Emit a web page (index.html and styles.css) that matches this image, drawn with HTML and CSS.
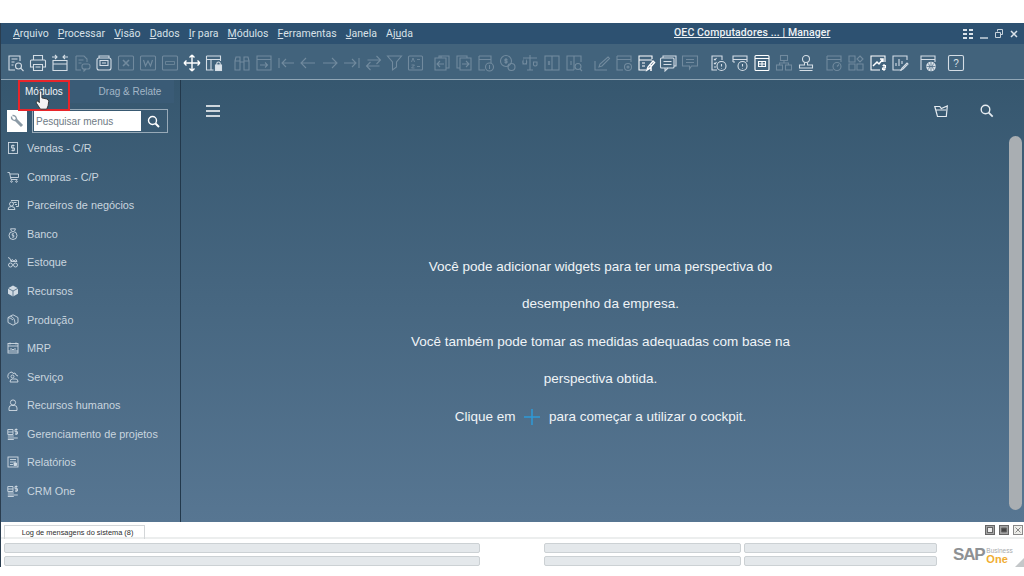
FILE: index.html
```html
<!DOCTYPE html>
<html lang="pt-BR">
<head>
<meta charset="utf-8">
<title>SAP Business One</title>
<link rel="stylesheet" href="styles.css">
</head>
<body>
<div class="app">
  <header class="menubar">
    <nav class="menus">
      <span><u>A</u>rquivo</span><span><u>P</u>rocessar</span><span><u>V</u>isão</span><span><u>D</u>ados</span><span><u>I</u>r para</span><span><u>M</u>ódulos</span><span><u>F</u>erramentas</span><span><u>J</u>anela</span><span>Aj<u>u</u>da</span>
    </nav>
    <a class="company">OEC Computadores ... | Manager</a>
    <div class="winctl">
      <svg width="12" height="12" viewBox="0 0 12 12"><path d="M1 1h4v2H1zM7 1h4v2H7zM1 5h4v2H1zM7 5h4v2H7zM1 9h4v2H1zM7 9h4v2H7z" fill="#dbe3ea"/></svg>
      <svg width="10" height="12" viewBox="0 0 10 12"><path d="M1 10h8" stroke="#c8d3dc" stroke-width="1.5"/></svg>
      <svg width="10" height="12" viewBox="0 0 10 12" fill="none" stroke="#c8d3dc"><path d="M3.500 3.500V1.500h5v5h-2M1.500 4.500h5v5h-5z"/></svg>
      <svg width="10" height="12" viewBox="0 0 10 12" stroke="#dbe3ea" stroke-width="1.5"><path d="M2 3l6 6M8 3l-6 6"/></svg>
    </div>
  </header>

  <div class="toolbar">
    <div class="tgroup">
      <svg class="ic" viewBox="0 0 18 18"><path d="M13 7V2H2v14h6M4.500 5h6M4.500 8h3M4.500 11h2"/><circle cx="11.500" cy="12" r="3"/><path d="M13.700 14.200L16.500 17"/></svg>
      <svg class="ic" viewBox="0 0 18 18"><path d="M4.500 6V1.500h9V6M4.500 13H1.500V7q0-1 1-1h13q1 0 1 1v6h-3"/><path d="M4.500 10.500h9v6h-9zM6.500 13h5"/></svg>
      <svg class="ic" viewBox="0 0 18 18"><path d="M2 6.500h14v10H2zM2 10h14M1 3h5M4 1l2 2-2 2M17 3h-5M14 1l-2 2 2 2"/></svg>
      <svg class="ic dim" viewBox="0 0 18 18"><path d="M3 2h8l3 3v3M3 2v14h5M5.500 6h5M5.500 9h3"/><rect x="9" y="10" width="8" height="5" rx="2"/><path d="M11 15v2l2-2"/></svg>
      <svg class="ic" viewBox="0 0 18 18"><path d="M4 4V2h10v2M2 6q0-2 2-2h10q2 0 2 2v8q0 2-2 2H4q-2 0-2-2z"/><path d="M5 6.500h8v5H5zM7 9h4"/></svg>
      <svg class="ic dim" viewBox="0 0 18 18"><rect x="1.500" y="2" width="15" height="14" rx="1"/><path d="M6 6l6 6M12 6l-6 6" stroke-width="1.600"/></svg>
      <svg class="ic dim" viewBox="0 0 18 18"><rect x="1.500" y="2" width="15" height="14" rx="1"/><path d="M4.500 6l2 6 2.500-5 2.500 5 2-6" stroke-width="1.200"/></svg>
      <svg class="ic dim" viewBox="0 0 18 18"><rect x="1.500" y="2" width="15" height="14" rx="1"/><path d="M4.500 7.500h9v3h-9z" stroke-width=".8"/></svg>
      <svg class="ic bright" viewBox="0 0 18 18"><path d="M9 1v16M1 9h16M9 1L6.500 3.500M9 1l2.500 2.500M9 17l-2.500-2.500M9 17l2.500-2.500M1 9l2.500-2.500M1 9l2.500 2.500M17 9l-2.500-2.500M17 9l-2.500 2.500" stroke-width="1.400"/></svg>
      <svg class="ic" viewBox="0 0 18 18"><path d="M1.500 2h14v5M1.500 2v14h7M1.500 5.500h14M6 5.500V16"/><rect x="10.500" y="11" width="6" height="5.500" fill="#dbe3ea"/><path d="M11.800 11V9.500q0-1.500 1.700-1.500t1.700 1.500V11"/></svg>
    </div>
    <div class="tgroup">
      <svg class="ic dim" viewBox="0 0 18 18"><path d="M2 7l1-4h4v13H2zM16 7l-1-4h-4v13h5zM7 8h4M2 7h5M11 7h5"/></svg>
      <svg class="ic dim" viewBox="0 0 18 18"><path d="M2 2h14v14H2zM2 5.500h14M5 11h7M10 8.500l2.500 2.500-2.500 2.500"/></svg>
      <svg class="ic dim" viewBox="0 0 18 18"><path d="M2 4v10M17 9H5M9 5L5 9l4 4"/></svg>
      <svg class="ic dim" viewBox="0 0 18 18"><path d="M16 9H2M7 4L2 9l5 5"/></svg>
      <svg class="ic dim" viewBox="0 0 18 18"><path d="M2 9h14M11 4l5 5-5 5"/></svg>
      <svg class="ic dim" viewBox="0 0 18 18"><path d="M16 4v10M1 9h12M9 5l4 4-4 4"/></svg>
    </div>
    <div class="tgroup tight">
      <svg class="ic dim" viewBox="0 0 18 18"><path d="M3 6h13M12 2l4 4-4 4M15 12H2M6 8l-4 4 4 4"/></svg>
      <svg class="ic dim" viewBox="0 0 18 18"><path d="M2 2h14l-5 6v5l-4 3V8z"/></svg>
      <svg class="ic dim" viewBox="0 0 18 18"><rect x="2" y="2" width="14" height="14" rx="1"/><path d="M5 8l1.500-4L8 8M10.500 5.500h3M5 11h3l-3 3h3M10.500 12.500h3" stroke-width=".9"/></svg>
    </div>
    <div class="tgroup">
      <svg class="ic dim" viewBox="0 0 18 18"><path d="M6 4V2h10v12h-3M2 4h11v12H2zM4 10h7M7 7l-3 3 3 3M8 2v2"/></svg>
      <svg class="ic dim" viewBox="0 0 18 18"><path d="M12 4V2H2v12h3M5 4h11v12H5zM7 10h7M11 7l3 3-3 3"/></svg>
      <svg class="ic dim" viewBox="0 0 18 18"><path d="M2 2h12v7M2 2v14h6M2 5.500h12"/><circle cx="12.500" cy="13" r="4"/><path d="M12.500 11v4"/></svg>
      <svg class="ic dim" viewBox="0 0 18 18"><circle cx="7" cy="7" r="5.500"/><circle cx="12.500" cy="13" r="3.500"/><path d="M7 4v6M8.500 5.500H6v1.500h2v1.500H5.500"/></svg>
      <svg class="ic dim" viewBox="0 0 18 18"><path d="M9 1v15M6 16h6M2 4h14M2 7a2 2 0 1 0 3.500 0V10h-3.500V7zM12.500 8h3.500v3a2 2 0 0 1-3.500 0z"/></svg>
      <svg class="ic dim" viewBox="0 0 18 18"><rect x="2" y="2" width="14" height="14"/><path d="M9 2v14M6 7v4M4.800 8h2.400M4.800 10h2.400"/></svg>
      <svg class="ic dim" viewBox="0 0 18 18"><path d="M16 8V2H2v14h7M9 2v14M6 7v4"/><circle cx="13" cy="12.500" r="3"/><path d="M15 15l2 2"/></svg>
    </div>
    <div class="tgroup">
      <svg class="ic dim" viewBox="0 0 18 18"><path d="M2 7v9h12M15 3l1.500 1.500L9 12l-3 1 1-3z"/></svg>
      <svg class="ic dim" viewBox="0 0 18 18"><path d="M2 2h14v6M2 2v14h6M2 5.500h14"/><circle cx="13" cy="13" r="3.500"/><circle cx="13" cy="13" r="1"/></svg>
      <svg class="ic bright" viewBox="0 0 18 18"><path d="M15 5V2H2v14h7M2 6h13M5 9h3M5 12h3"/><path d="M10 16l1-3 5-6 1.500 1.500-5 6zM14 11v6" stroke-width="1.500"/></svg>
      <svg class="ic" viewBox="0 0 18 18"><path d="M4 4V2h13v10h-2"/><rect x="1.500" y="4" width="13.500" height="10" rx="1"/><path d="M4.500 7.500h8M4.500 10.500h8M6 14v3l3-3"/></svg>
      <svg class="ic dim" viewBox="0 0 18 18"><path d="M1.500 2h15v10h-6l-2 3v-3h-7zM5 5.500h8M5 8.500h8"/></svg>
    </div>
    <div class="tgroup">
      <svg class="ic" viewBox="0 0 18 18"><path d="M13 6V2H3v14h5M5 5l1 1 1.500-2M5 9l1 1 1.500-2M5 13h2"/><circle cx="12.500" cy="12" r="4.500"/><path d="M12.500 10v2.500M12.500 14v.5"/></svg>
      <svg class="ic" viewBox="0 0 18 18"><path d="M2 8V2h14v6M2 5.500h14M2 8h2"/><circle cx="11.500" cy="12" r="4.500"/><path d="M11.500 10v2.500M11.500 14v.5"/></svg>
      <svg class="ic bright" viewBox="0 0 18 18"><rect x="2" y="1.500" width="14" height="15" rx="1"/><path d="M2 4.500h14M5 7.500h8M5 10h8M5 12.500h8M5.500 7v6M9 7v6M12.500 7v6"/></svg>
      <svg class="ic dim" viewBox="0 0 18 18"><rect x="5.500" y="1.500" width="7" height="5"/><rect x="1.500" y="11" width="6" height="5"/><rect x="10.500" y="11" width="6" height="5"/><path d="M9 6.500V9M4.500 11V9h9v2"/></svg>
      <svg class="ic" viewBox="0 0 18 18"><circle cx="9" cy="5" r="3.500"/><path d="M7.500 8.500V11H2.500v3h13v-3h-5V8.500M2.500 16.500h13"/></svg>
    </div>
    <div class="tgroup">
      <svg class="ic dim" viewBox="0 0 18 18"><path d="M2 2h14v6M2 2v14h6M2 5.500h14"/><circle cx="12" cy="12.500" r="4"/><path d="M12 12.500l2-2"/></svg>
      <svg class="ic dim" viewBox="0 0 18 18"><path d="M2 2h6v6H2zM2 10h6v6H2zM10 10h6v6h-6zM13 2l3 3-3 3-3-3z"/></svg>
      <svg class="ic bright" viewBox="0 0 18 18"><path d="M16 8V2H2v14h9"/><path d="M4 12l4-4 2 2 4-5M11 5h3v3" stroke-width="1.500"/><path d="M15 10v7M13.500 11.500h3v2.500h-3v1.500h3" stroke-width="1.100"/></svg>
      <svg class="ic" viewBox="0 0 18 18"><path d="M16 6V2H2v14h9M5 12V9M8 12V5M11 10V7"/><path d="M10 16l1-2 5-5 1 1-5 5z"/></svg>
    </div>
    <div class="tgroup">
      <svg class="ic" viewBox="0 0 18 18"><path d="M2 16V2h14v6M2 5.500h14"/><circle cx="12" cy="12.500" r="4.800" fill="#dbe3ea" stroke="none"/><path d="M7.500 12.500h9M12 8v9M9.500 9.500q2.500 3 0 6M14.500 9.500q-2.500 3 0 6" stroke="#41627c" stroke-width=".7"/></svg>
    </div>
    <div class="tgroup">
      <svg class="ic" viewBox="0 0 18 18"><rect x="1.500" y="1.500" width="15" height="15" rx="1.500"/><text x="9" y="13" text-anchor="middle" class="qm">?</text></svg>
    </div>
  </div>

  <main class="stage">
    <aside class="sidebar">
      <div class="tabs">
        <div class="tab active">Módulos</div>
        <div class="tab">Drag &amp; Relate</div>
      </div>
      <div class="searchrow">
        <button class="wrench"><svg width="14" height="14" viewBox="0 0 14 14" fill="none" stroke="#8b9aa6"><path d="M12 12L5.500 5.500" stroke-width="3"/><path d="M1.500 2.500a3.300 3.300 0 0 0 4.800 3.500M2.500 1.500a3.300 3.300 0 0 1 3.500 4.800" stroke-width="1.400"/></svg></button>
        <div class="search">
          <input class="searchinput" placeholder="Pesquisar menus">
          <span class="searchbtn"><svg width="13" height="13" viewBox="0 0 13 13" fill="none" stroke="#fff" stroke-width="1.400"><circle cx="5.500" cy="5.500" r="4"/><path d="M8.500 8.500L12 12" stroke-width="2"/></svg></span>
        </div>
      </div>
      <ul class="modules">
        <li><svg class="mi" viewBox="0 0 12 12"><rect x="1.500" y=".5" width="9" height="11"/><path d="M7.500 3.500h-3v2.500h3v2.500h-3M6 2.500v7" stroke-width=".9"/></svg>Vendas - C/R</li>
        <li><svg class="mi" viewBox="0 0 12 12"><path d="M.5 1.500h2l1.500 7h6.500M3 3h8.500v3.500H3.700"/><circle cx="4.500" cy="10.500" r=".8"/><circle cx="9.500" cy="10.500" r=".8"/></svg>Compras - C/P</li>
        <li><svg class="mi" viewBox="0 0 12 12"><path d="M4 1.500h7.500v6H9"/><circle cx="4.500" cy="5" r="2"/><path d="M1 10.500q0-3 3.500-3t3.500 3zM6.500 3.500h3M8 5.500h2"/></svg>Parceiros de negócios</li>
        <li><svg class="mi" viewBox="0 0 12 12"><circle cx="6" cy="7.500" r="4"/><path d="M4.500 3L3.500.8h5L7.500 3M7 5.800H5.200v1.600h1.600v1.700H5"/></svg>Banco</li>
        <li><svg class="mi" viewBox="0 0 12 12"><path d="M1 1.500l2 1 1 3h6M4 5.500l1-2 2 1.500 2-1.500 1 2"/><circle cx="3.500" cy="9" r="2"/><circle cx="8.500" cy="9" r="2"/></svg>Estoque</li>
        <li><svg class="mi solid" viewBox="0 0 12 12"><path d="M6 .5l5 2.800v5.400L6 11.500 1 8.700V3.300z"/><path d="M1 3.300L6 6l5-2.700M6 6v5.500" stroke="#44637e" stroke-width=".8" fill="none"/></svg>Recursos</li>
        <li><svg class="mi" viewBox="0 0 12 12"><path d="M6 .8l5 2.700v5L6 11.200 1 8.500v-5zM3.500 2.200Q8 3.500 8 9.800M1 3.500q3 .5 5 2.500"/></svg>Produção</li>
        <li><svg class="mi" viewBox="0 0 12 12"><rect x="1" y="1.500" width="10" height="9.500"/><path d="M1 4h10M3 .5v2M9 .5v2M3 7h2l1 1 1-1h2M1 9h10"/></svg>MRP</li>
        <li><svg class="mi" viewBox="0 0 12 12"><path d="M5 1a4.200 4.200 0 0 0-3.500 6.500M5 1l1 1.500L8 2l1 2 2 1M4 5.500a1.500 1.500 0 0 1 3 0q0 1.500-1.500 1.500T4 5.500zM3 11q0-3 2.500-3H9q2 0 2 3z"/></svg>Serviço</li>
        <li><svg class="mi" viewBox="0 0 12 12"><circle cx="6" cy="3.500" r="2.600"/><path d="M2 11.500V9q0-2.500 2.500-2.500h3Q10 6.500 10 9v2.500z"/></svg>Recursos humanos</li>
        <li><svg class="mi" viewBox="0 0 12 12"><path d="M.8 1.500h5.200v5H.8zM.8 4h5.200M.8 8h6M.8 10h10M.8 11.500h6"/><path d="M10.500 1.500H8v2.200h2.500V6H8M9.200 .5v6.500"/></svg>Gerenciamento de projetos</li>
        <li><svg class="mi" viewBox="0 0 12 12"><rect x="1" y="1" width="10" height="10"/><path d="M3 3.500h6M3 6h6M3 8.500h3"/><path d="M7 7h2.500v2.500H7z" class="fillc"/></svg>Relatórios</li>
        <li><svg class="mi" viewBox="0 0 12 12"><path d="M.8 1.500h5.200v5H.8zM.8 4h5.200M.8 8h6M.8 10h10M.8 11.500h6"/><path d="M10.500 1.500H8v2.200h2.500V6H8M9.200 .5v6.500"/></svg>CRM One</li>
      </ul>
    </aside>
    <section class="cockpit">
      <div class="cockpit-bar">
        <svg class="burger" width="14" height="12" viewBox="0 0 14 12" stroke="#fff" stroke-width="1.500"><path d="M0 1h14M0 6h14M0 11h14"/></svg>
        <div class="cockpit-actions">
          <svg width="14" height="14" viewBox="0 0 14 14" fill="none" stroke="#e6ecf1" stroke-width="1.200"><path d="M.8 2.500h5l1.500 2 6-2.500-1 10.500H3.500zM2 6h10"/></svg>
          <svg width="14" height="14" viewBox="0 0 14 14" fill="none" stroke="#e6ecf1" stroke-width="1.400"><circle cx="5.500" cy="5.500" r="4.300"/><path d="M8.700 8.700l4 4" stroke-width="1.800"/></svg>
        </div>
      </div>
      <div class="message">
        <p>Você pode adicionar widgets para ter uma perspectiva do</p>
        <p>desempenho da empresa.</p>
        <p>Você também pode tomar as medidas adequadas com base na</p>
        <p>perspectiva obtida.</p>
        <p class="hint">Clique em <svg class="plus" width="16" height="16" viewBox="0 0 16 16" stroke="#2e9bd8" stroke-width="1.500"><path d="M8 0v16M0 8h16"/></svg> para começar a utilizar o cockpit.</p>
      </div>
      <div class="scrollbar"></div>
    </section>
    <div class="pointer">
      <div class="callout"></div>
      <svg class="hand" width="15" height="20" viewBox="0 0 14 19"><path d="M4 10V2.200q0-1.400 1.200-1.400t1.200 1.400V7.500l4.500 1q2 .5 2 2.300l-.6 4.200-1.300 3.200H5l-3.800-5.700q-.8-1.500.5-2t2.300 1.500z" fill="#f4f4f4" stroke="#333" stroke-width=".9"/></svg>
    </div>
  </main>

  <footer class="statusarea">
    <div class="logtabs">
      <div class="logtab">Log de mensagens do sistema (8)</div>
      <div class="panelbtns">
        <svg width="10" height="10" viewBox="0 0 10 10" fill="none" stroke="#666"><rect x=".5" y=".5" width="9" height="9" fill="#a4a4a4"/><rect x="2.500" y="2.500" width="5" height="5" fill="#eee"/></svg>
        <svg width="10" height="10" viewBox="0 0 10 10" fill="none" stroke="#666"><rect x=".5" y=".5" width="9" height="9" fill="#a4a4a4"/><path d="M2.500 3h5v4h-5z" fill="#444"/></svg>
        <svg width="10" height="10" viewBox="0 0 10 10" fill="none" stroke="#888"><rect x=".5" y=".5" width="9" height="9" fill="#eeeeea"/><path d="M2.500 2.500l5 5M7.500 2.500l-5 5"/></svg>
      </div>
    </div>
    <div class="statusgrid">
      <div class="fields wide"><div class="field"></div><div class="field"></div></div>
      <div class="fields mid"><div class="field"></div><div class="field"></div></div>
      <div class="fields mid last"><div class="field"></div><div class="field"></div></div>
      <div class="brand">
        <span class="sap">SAP</span>
        <span class="one"><small>Business</small>One</span>
        <i class="grip"></i>
      </div>
    </div>
  </footer>
</div>
</body>
</html>
```
FILE: styles.css
```css
* { box-sizing: border-box; }
html, body { margin: 0; height: 100%; background: #fff; overflow: hidden; }
body { padding-top: 23px; font-family: "Liberation Sans", Arial, sans-serif; }

.app { height: 544px; display: flex; flex-direction: column; position: relative; border-left: 1px solid #2a3d4f; }

/* Menu bar */
.menubar { height: 21px; flex: none; background: #2d5171; display: flex; align-items: center; color: #dfe6ec; }
.menus { display: flex; gap: 9.150px; padding-left: 12px; font: 10.500px Roboto, sans-serif; color: #d8e1e8; width: 672px; flex: none; }
.company { margin: 0 0 2px 1px; font: 500 10.500px Roboto, sans-serif; color: #eef2f5; text-decoration: underline; flex: none; letter-spacing: .12px; }
.winctl { margin-left: auto; padding-right: 5px; display: flex; align-items: center; gap: 5px; }

/* Toolbar */
.toolbar { height: 36px; flex: none; background: #42637c; border-bottom: 1px solid #90a6b6; display: flex; align-items: center; gap: 6px; padding: 3px 0 0 4px; }
.tgroup { display: flex; align-items: center; }
.tgroup.tight { margin: 0 -1px 0 -6px; }
.tgroup.tight .ic { width: 21px; }
.ic { width: 22px; height: 18px; fill: none; stroke: #d4dde5; stroke-width: 1.100; color: #d4dde5; }
.ic.dim { opacity: .32; }
.ic.bright { stroke: #fff; }
.qm { font: 10px "Liberation Sans", sans-serif; fill: #dbe3ea; stroke: none; }

/* Main area */
.stage { flex: 1; min-height: 0; display: flex; position: relative; background: linear-gradient(#36576f, #577692); }
.sidebar { width: 180px; flex: none; border-right: 1.500px solid #22384b; display: flex; flex-direction: column; }
.tabs { height: 23px; display: flex; flex: none; align-items: center; font-size: 10px; color: #a9bac8; }
.tab { height: 23px; line-height: 23px; }
.tab.active { width: 69px; padding-left: 24px; color: #f2f5f8; }
.tab:not(.active) { width: 104px; background: #3a5b76; color: #a3b6c6; padding-left: 16px; text-align: center; }

.searchrow { display: flex; align-items: center; gap: 5px; padding: 6px 0 0 6px; }
.wrench { width: 20px; height: 22px; background: #fff; border: 0; padding: 0; display: flex; align-items: center; justify-content: center; }
.search { display: flex; width: 136px; height: 24px; border: 1px solid #98aab8; padding: 1px; }
.searchinput { width: 107px; height: 20px; border: 0; padding: 0 0 0 2px; font: 10px "Liberation Sans", sans-serif; outline: 0; background: #fff; }
.searchinput::placeholder { color: #6f7b85; opacity: 1; }
.searchbtn { flex: 1; display: flex; align-items: center; justify-content: center; }

.modules { list-style: none; margin: 1px 0 0; padding: 0 0 0 6px; color: #c9d5df; font-size: 10.850px; }
.modules li { height: 28.550px; display: flex; align-items: center; gap: 8px; }
.mi { width: 12px; height: 12px; flex: none; fill: none; stroke: #d0dae3; stroke-width: .9; }
.mi.solid { fill: #d0dae3; stroke: none; }
.fillc { fill: #d0dae3; }

/* Cockpit workspace */
.cockpit { flex: 1; position: relative; display: flex; flex-direction: column; }
.cockpit-bar { display: flex; align-items: center; justify-content: space-between; padding: 24px 30px 0 25px; }
.burger { display: block; }
.cockpit-actions { display: flex; gap: 32px; align-items: center; }
.message { margin-top: 129.500px; text-align: center; color: #f0f4f7; font-size: 13.500px; padding-right: 4px; }
.message p { margin: 0; height: 37.600px; line-height: 37.600px; }
.plus { vertical-align: -4px; margin: 0 5px; }
.scrollbar { position: absolute; right: 2px; top: 56px; height: 374px; width: 13px; border-radius: 7px; background: #a9aeb2; }

/* Cursor and highlight over the first tab */
.pointer { position: absolute; left: 0; top: 0; }
.callout { position: absolute; left: 17px; top: 0; width: 52px; height: 31px; border: 2px solid #e8252a; }
.hand { position: absolute; left: 34px; top: 10px; }

/* Message log and status fields */
.statusarea { height: 45px; flex: none; background: #fff; }
.logtabs { height: 17px; display: flex; justify-content: space-between; padding: 3px 1px 0 3px; border-bottom: 2px solid #eceeee; }
.logtab { width: 141px; height: 14px; padding-left: 6px; border: 1px solid #d3d6d8; border-bottom: 0; font: 7.400px/13px "Liberation Sans", sans-serif; color: #2c2c2c; text-align: center; }
.panelbtns { display: flex; gap: 4px; margin-top: 0; }
.statusgrid { display: flex; padding: 4px 0 0 3px; }
.fields { display: flex; flex-direction: column; gap: 3px; }
.fields.wide { width: 476px; margin-right: 64px; }
.fields.mid { width: 197px; margin-right: 3px; }
.fields.mid.last { width: 193px; margin-right: 0; }
.field { height: 10px; background: #e4e8eb; border: 1px solid #ccd1d4; border-radius: 2px; }
.brand { position: relative; margin-left: 16px; display: flex; align-items: center; height: 23px; flex: 1; }
.sap { font: 700 17px/1 "Liberation Sans", sans-serif; color: #8e9194; letter-spacing: -1.200px; }
.one { display: flex; flex-direction: column; margin-left: 2px; font: 700 11px/8px "Liberation Sans", sans-serif; color: #f0ad32; }
.one small { font: 6.500px/8px "Liberation Sans", sans-serif; color: #a8abae; }
.grip { position: absolute; right: 0; bottom: -1px; border-left: 9px solid transparent; border-bottom: 9px solid #c4c7c9; }
```
